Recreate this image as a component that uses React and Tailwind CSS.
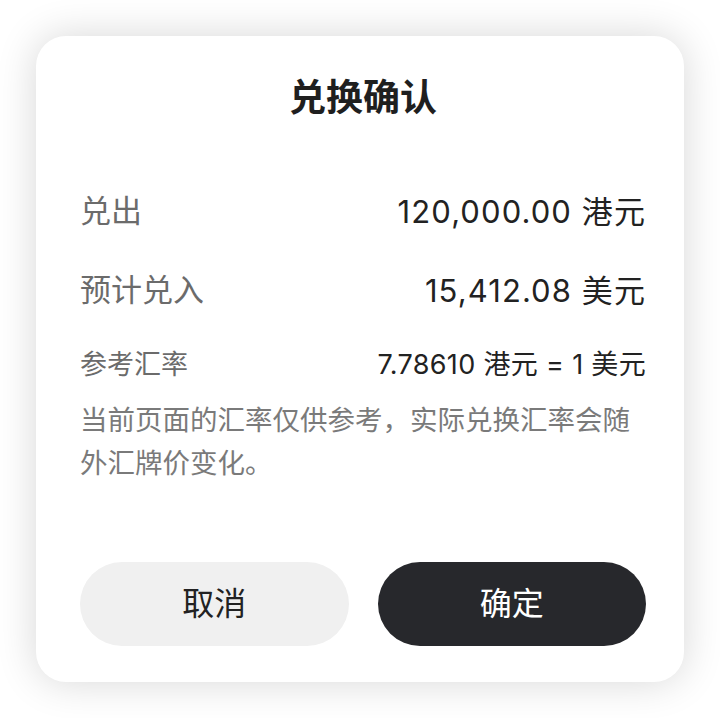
import React from 'react';

const font = { fontFamily: 'Roboto, "Noto Sans CJK SC", sans-serif' };
const numFont = { fontFamily: 'Inter, "Noto Sans CJK SC", sans-serif' };

const rows = [
  { label: '兑出', value: '120,000.00 港元' },
  { label: '预计兑入', value: '15,412.08 美元' },
];

export default function App() {
  return (
    <div className="w-[720px] h-[718px] bg-white pt-[36px] pl-[36px]" style={font}>
      <div className="w-[648px] h-[646px] bg-white rounded-[30px] shadow-[0_0_40px_rgba(0,0,0,0.16)] pt-[44px] pl-[44px] pr-[38px] flex flex-col">
        {/* Titre */}
        <h2 className="h-[38px] leading-[38px] text-center text-[37px] font-bold text-[#1f1f1f]">
          兑换确认
        </h2>

        {/* Montants */}
        <div className="mt-[74px] flex flex-col gap-[39px]">
          {rows.map((row) => (
            <div key={row.label} className="flex justify-between items-center h-[40px] text-[31px]">
              <span className="text-[#6b6b6b]">{row.label}</span>
              <span className="text-[#222] tracking-[0.035em]" style={numFont}>{row.value}</span>
            </div>
          ))}
        </div>

        {/* Taux */}
        <div className="mt-[36px] flex justify-between items-center h-[36px] text-[27px]">
          <span className="text-[#6b6b6b]">参考汇率</span>
          <span className="text-[#222] tracking-[0.012em]" style={numFont}>7.78610 港元 = 1 美元</span>
        </div>

        <p className="mt-[16px] text-[27.5px] leading-[43px] text-[#7a7a7a]">
          当前页面的汇率仅供参考，实际兑换汇率会随外汇牌价变化。
        </p>

        {/* Boutons */}
        <div className="mt-auto mb-[36px] flex gap-[29px]">
          <button className="flex-1 h-[84px] rounded-full bg-[#f0f0f0] text-[32px] text-[#222]">
            取消
          </button>
          <button className="flex-1 h-[84px] rounded-full bg-[#27282c] text-[32px] text-white">
            确定
          </button>
        </div>
      </div>
    </div>
  );
}
